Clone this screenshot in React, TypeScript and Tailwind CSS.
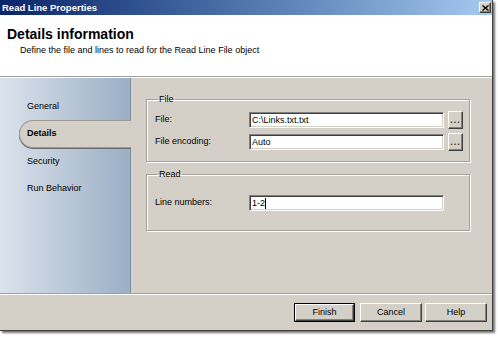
import React from "react";

const raised =
  "border border-t-white border-l-white border-r-[#404040] border-b-[#404040] shadow-[inset_-1px_-1px_0_#808080]";
const sunken =
  "border border-t-[#808080] border-l-[#808080] border-r-white border-b-white shadow-[inset_1px_1px_0_#404040,inset_-1px_-1px_0_#d4d0c8]";

function TextBox({ value, caret }: { value: string; caret?: boolean }) {
  return (
    <div className={`h-[16px] bg-white flex items-center pl-[2px] ${sunken}`}>
      <span className="leading-[11px]">{value}</span>
      {caret && <span className="inline-block w-px h-[11px] bg-black" />}
    </div>
  );
}

function DotsButton() {
  return (
    <div className={`h-[18px] w-[15px] flex items-end justify-center pb-[5px] bg-[#d4d0c8] ${raised}`}>
      <span className="text-[9px] leading-[5px] font-bold tracking-[1px] text-[#333]">...</span>
    </div>
  );
}

function DlgButton({ label, w, isDefault }: { label: string; w: string; isDefault?: boolean }) {
  return (
    <div className={`${w} h-[19px] ${isDefault ? "border border-black" : ""}`}>
      <div className={`w-full h-full flex items-center justify-center bg-[#d4d0c8] ${raised}`}>
        {label}
      </div>
    </div>
  );
}

export default function App() {
  const nav = ["General", "Details", "Security", "Run Behavior"];

  return (
    <div className="w-[500px] h-[337px] bg-white font-['Liberation_Sans',Arial,sans-serif] text-[9px] text-black">
      <div className="w-[493px] h-[331px] flex flex-col bg-[#d4d0c8] border-r border-b border-[#404040] shadow-[2px_2px_2px_rgba(0,0,0,0.55)]">
        {/* Title bar */}
        <div className="h-[15px] flex items-center justify-between pl-[2px] pr-[1px] bg-linear-to-r from-[#0a246a] to-[#a6caf0]">
          <span className="text-white font-bold text-[9.5px] leading-[11px]">Read Line Properties</span>
          <div className={`w-[12px] h-[11px] flex items-center justify-center bg-[#d4d0c8] ${raised}`}>
            <svg width="7" height="6" viewBox="0 0 7 6">
              <path d="M0.5 0.5 L6.5 5.5 M6.5 0.5 L0.5 5.5" stroke="#000" strokeWidth="1.4" />
            </svg>
          </div>
        </div>

        {/* Header */}
        <div className="h-[61px] bg-white pl-[7px] pt-[11px]">
          <div className="text-[14px] leading-[16px] font-bold">Details information</div>
          <div className="mt-[3px] ml-[13px] leading-[11px]">
            Define the file and lines to read for the Read Line File object
          </div>
        </div>
        <div className="h-[2px] border-t border-[#a0a0a0] border-b border-b-white" />

        {/* Body */}
        <div className="h-[215px] flex">
          <div className="w-[131px] shrink-0 border-r border-[#7d8ea3] bg-linear-to-r from-[#dce3ec] to-[#9bafc5] pt-[15px] flex flex-col">
            {nav.map((item) =>
              item === "Details" ? (
                <div
                  key={item}
                  className="relative z-10 h-[28px] ml-[19px] -mr-px pl-[7px] flex items-center font-bold bg-[#d4d0c8] rounded-l-[14px] border border-r-0 border-[#9c9a94] shadow-[0_1px_0_#6b6b6b]"
                >
                  {item}
                </div>
              ) : (
                <div key={item} className="h-[27px] ml-[19px] pl-[8px] flex items-center">
                  {item}
                </div>
              )
            )}
          </div>

          <div className="flex-1 pl-[15px] pt-[16px]">
            <fieldset className="w-[324px] border border-[#a5a19a] shadow-[inset_1px_1px_0_#fff,1px_1px_0_#fff] pl-[8px] pb-[10px]">
              <legend className="ml-[3px] px-[1px] leading-[11px]">File</legend>
              <div className="mt-[6px] grid grid-cols-[90px_195px_15px] gap-x-[4px] gap-y-[4px] items-center">
                <span>File:</span>
                <TextBox value="C:\Links.txt.txt" />
                <DotsButton />
                <span>File encoding:</span>
                <TextBox value="Auto" />
                <DotsButton />
              </div>
            </fieldset>

            <fieldset className="mt-[7px] w-[324px] border border-[#a5a19a] shadow-[inset_1px_1px_0_#fff,1px_1px_0_#fff] pl-[8px] pb-[19px]">
              <legend className="ml-[3px] px-[1px] leading-[11px]">Read</legend>
              <div className="mt-[15px] grid grid-cols-[94px_195px] items-center">
                <span>Line numbers:</span>
                <TextBox value="1-2" caret />
              </div>
            </fieldset>
          </div>
        </div>

        {/* Footer */}
        <div className="h-[2px] border-t border-[#a0a0a0] border-b border-b-white" />
        <div className="flex-1 flex justify-end items-start pt-[8px] pr-[5px]">
          <DlgButton label="Finish" w="w-[61px]" isDefault />
          <div className="ml-[5px]">
            <DlgButton label="Cancel" w="w-[62px]" />
          </div>
          <div className="ml-[3px]">
            <DlgButton label="Help" w="w-[62px]" />
          </div>
        </div>
      </div>
    </div>
  );
}
